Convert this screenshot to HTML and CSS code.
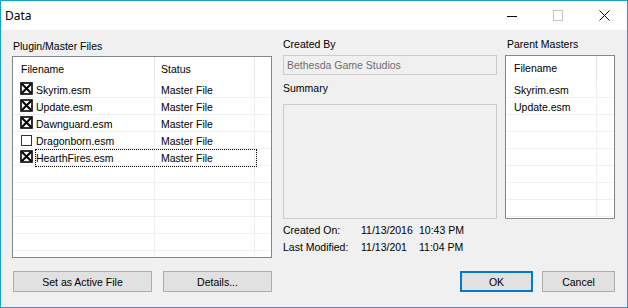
FILE: index.html
```html
<!DOCTYPE html>
<html>
<head>
<meta charset="utf-8">
<link rel="stylesheet" href="styles.css">
</head>
<body>
<div class="window">
  <div class="titlebar">
    <span class="title">Data</span>
    <div class="caption-btns">
      <span class="cbtn"><svg width="10" height="10" viewBox="0 0 10 10"><path d="M0 5.5H10" stroke="#000" stroke-width="1"/></svg></span>
      <span class="cbtn"><svg width="10" height="11" viewBox="0 0 10 11"><rect x="0.5" y="0.5" width="9" height="10" fill="none" stroke="#c4c4c4"/></svg></span>
      <span class="cbtn"><svg width="11" height="11" viewBox="0 0 11 11"><path d="M0.5 0.5L10.5 10.5M10.5 0.5L0.5 10.5" stroke="#000" stroke-width="1"/></svg></span>
    </div>
  </div>
  <div class="content">
    <div class="top">
      <div class="col-left">
        <div class="field-label pad1">Plugin/Master Files</div>
        <div class="list list-left">
          <div class="lhead">
            <div class="hcell lc1">Filename</div>
            <div class="hcell lc2">Status</div>
            <div class="hcell lc3 nob"></div>
          </div>
          <div class="row">
            <div class="cell lc1 chk"><svg class="cb" width="13" height="13" viewBox="0 0 13 13"><rect x="1" y="1" width="11" height="11" fill="#fff" stroke="#000" stroke-width="1.6"/><path d="M2 2L11 11M11 2L2 11" stroke="#000" stroke-width="2"/></svg><span class="fname">Skyrim.esm</span></div>
            <div class="cell lc2">Master File</div>
            <div class="cell lc3 nob"></div>
          </div>
          <div class="row">
            <div class="cell lc1 chk"><svg class="cb" width="13" height="13" viewBox="0 0 13 13"><rect x="1" y="1" width="11" height="11" fill="#fff" stroke="#000" stroke-width="1.6"/><path d="M2 2L11 11M11 2L2 11" stroke="#000" stroke-width="2"/></svg><span class="fname">Update.esm</span></div>
            <div class="cell lc2">Master File</div>
            <div class="cell lc3 nob"></div>
          </div>
          <div class="row">
            <div class="cell lc1 chk"><svg class="cb" width="13" height="13" viewBox="0 0 13 13"><rect x="1" y="1" width="11" height="11" fill="#fff" stroke="#000" stroke-width="1.6"/><path d="M2 2L11 11M11 2L2 11" stroke="#000" stroke-width="2"/></svg><span class="fname">Dawnguard.esm</span></div>
            <div class="cell lc2">Master File</div>
            <div class="cell lc3 nob"></div>
          </div>
          <div class="row">
            <div class="cell lc1 chk"><svg class="cb" width="13" height="13" viewBox="0 0 13 13"><rect x="1.5" y="2.5" width="10" height="10" fill="#fff" stroke="#333" stroke-width="1"/></svg><span class="fname">Dragonborn.esm</span></div>
            <div class="cell lc2">Master File</div>
            <div class="cell lc3 nob"></div>
          </div>
          <div class="row focus">
            <div class="cell lc1 chk"><svg class="cb" width="13" height="13" viewBox="0 0 13 13"><rect x="1" y="1" width="11" height="11" fill="#fff" stroke="#000" stroke-width="1.6"/><path d="M2 2L11 11M11 2L2 11" stroke="#000" stroke-width="2"/></svg><span class="fname">HearthFires.esm</span></div>
            <div class="cell lc2">Master File</div>
            <div class="cell lc3 nob"></div>
          </div>
          <div class="row"><div class="cell lc1"></div><div class="cell lc2"></div><div class="cell lc3 nob"></div></div>
          <div class="row"><div class="cell lc1"></div><div class="cell lc2"></div><div class="cell lc3 nob"></div></div>
          <div class="row"><div class="cell lc1"></div><div class="cell lc2"></div><div class="cell lc3 nob"></div></div>
          <div class="row"><div class="cell lc1"></div><div class="cell lc2"></div><div class="cell lc3 nob"></div></div>
          <div class="row"><div class="cell lc1"></div><div class="cell lc2"></div><div class="cell lc3 nob"></div></div>
          <div class="row"><div class="cell lc1"></div><div class="cell lc2"></div><div class="cell lc3 nob"></div></div>
        </div>
      </div>
      <div class="col-mid">
        <div class="field-label">Created By</div>
        <div class="textbox">Bethesda Game Studios</div>
        <div class="field-label summary-label">Summary</div>
        <div class="summary"></div>
        <div class="meta meta1">
          <span class="meta-label">Created On:</span>
          <span class="meta-date">11/13/2016</span>
          <span class="meta-time">10:43 PM</span>
        </div>
        <div class="meta meta2">
          <span class="meta-label">Last Modified:</span>
          <span class="meta-date">11/13/201</span>
          <span class="meta-time">11:04 PM</span>
        </div>
      </div>
      <div class="col-right">
        <div class="field-label pad2">Parent Masters</div>
        <div class="list list-right">
          <div class="lhead">
            <div class="hcell rc1">Filename</div>
            <div class="hcell rc2 nob"></div>
          </div>
          <div class="row"><div class="cell rc1">Skyrim.esm</div><div class="cell rc2 nob"></div></div>
          <div class="row"><div class="cell rc1">Update.esm</div><div class="cell rc2 nob"></div></div>
          <div class="row"><div class="cell rc1"></div><div class="cell rc2 nob"></div></div>
          <div class="row"><div class="cell rc1"></div><div class="cell rc2 nob"></div></div>
          <div class="row"><div class="cell rc1"></div><div class="cell rc2 nob"></div></div>
          <div class="row"><div class="cell rc1"></div><div class="cell rc2 nob"></div></div>
          <div class="row"><div class="cell rc1"></div><div class="cell rc2 nob"></div></div>
          <div class="row"><div class="cell rc1"></div><div class="cell rc2 nob"></div></div>
          <div class="row"><div class="cell rc1"></div><div class="cell rc2 nob"></div></div>
        </div>
      </div>
    </div>
    <div class="buttons">
      <button class="btn btn-active">Set as Active File</button>
      <button class="btn btn-details">Details...</button>
      <button class="btn btn-ok">OK</button>
      <button class="btn btn-cancel">Cancel</button>
    </div>
  </div>
</div>
</body>
</html>
```

FILE: styles.css
```css
* { box-sizing: border-box; }
body {
  margin: 0;
  font-family: "Liberation Sans", Arial, sans-serif;
  font-size: 10.5px;
  color: #000;
}
.window {
  width: 628px;
  height: 308px;
  border: 1px solid #1ba1c9;
  display: flex;
  flex-direction: column;
  background: #f0f0f0;
  overflow: hidden;
}
.titlebar {
  height: 29px;
  flex-shrink: 0;
  background: #fff;
  display: flex;
  align-items: center;
}
.title {
  flex: 1;
  padding-left: 4px;
  font-family: "Noto Sans", "Open Sans", sans-serif;
  font-size: 12px;
}
.caption-btns {
  display: flex;
  height: 100%;
}
.cbtn {
  width: 46px;
  display: flex;
  align-items: center;
  justify-content: center;
}
.content {
  flex: 1;
  display: flex;
  flex-direction: column;
}
.top {
  display: flex;
  padding-left: 11px;
}
.col-left {
  width: 260px;
  padding-top: 10px;
}
.col-mid {
  width: 214px;
  margin-left: 11px;
  padding-top: 8px;
}
.col-right {
  width: 110px;
  margin-left: 8px;
  padding-top: 8px;
}
.field-label {
  line-height: 13px;
  white-space: nowrap;
}
.pad1 { padding-left: 1px; }
.pad2 { padding-left: 2px; }

.list {
  background: #fff;
  border: 1px solid #828790;
  overflow: hidden;
  display: flex;
  flex-direction: column;
}
.list-left { height: 202px; margin-top: 3px; }
.list-right { height: 164px; margin-top: 4px; }
.lhead {
  display: flex;
  height: 24px;
  flex-shrink: 0;
}
.list-right .lhead { height: 25px; }
.hcell {
  border-right: 1px solid #e5e5e5;
  line-height: 24px;
  white-space: nowrap;
}
.list-right .hcell { line-height: 25px; }
.row {
  display: flex;
  height: 17px;
  flex-shrink: 0;
  border-bottom: 1px solid #f0f0f0;
}
.cell {
  border-right: 1px solid #f0f0f0;
  line-height: 16px;
  padding-top: 1px;
  overflow: hidden;
  white-space: nowrap;
}
.nob { border-right: none; }
.lc1 { width: 142px; padding-left: 8px; }
.lc2 { width: 100px; padding-left: 6px; }
.lc3 { flex: 1; }
.rc1 { width: 91px; padding-left: 8px; }
.rc2 { flex: 1; }
.chk {
  display: flex;
  align-items: flex-start;
  padding-left: 7px;
}
.cb { flex-shrink: 0; }
.fname { margin-left: 3px; }
.row.focus { position: relative; }
.row.focus::after {
  content: "";
  position: absolute;
  left: 22px;
  top: 0;
  width: 220px;
  height: 16px;
  border: 1px dotted #000;
}

.textbox {
  height: 20px;
  margin-top: 4px;
  border: 1px solid #cccccc;
  background: #f0f0f0;
  color: #6d6d6d;
  padding-left: 3px;
  line-height: 18px;
  white-space: nowrap;
}
.summary-label { margin-top: 7px; }
.summary {
  height: 115px;
  margin-top: 9px;
  border: 1px solid #cccccc;
  background: #f0f0f0;
}
.meta {
  display: flex;
  line-height: 13px;
  white-space: nowrap;
}
.meta1 { margin-top: 5px; }
.meta2 { margin-top: 4px; }
.meta-label { width: 78px; }
.meta-date { width: 58px; }

.buttons {
  display: flex;
  margin-top: 13px;
  padding: 0 12px;
}
.btn {
  height: 21px;
  padding: 0;
  margin: 0;
  background: #e1e1e1;
  border: 1px solid #adadad;
  font-family: inherit;
  font-size: 10.5px;
  color: #000;
  display: flex;
  align-items: center;
  justify-content: center;
}
.btn-active { width: 139px; }
.btn-details { width: 109px; margin-left: 11px; }
.btn-ok { width: 73px; margin-left: auto; border: 2px solid #0078d7; }
.btn-cancel { width: 73px; margin-left: 9px; }
```
